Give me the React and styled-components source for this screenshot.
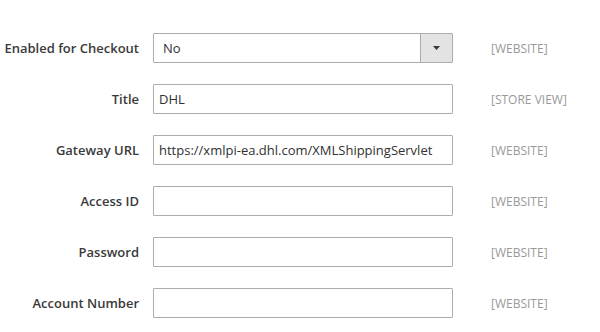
import styled, { createGlobalStyle } from "styled-components";

const GlobalStyle = createGlobalStyle`
  html, body {
    margin: 0;
    padding: 0;
    background: #ffffff;
  }
  body {
    font-family: "Open Sans", "Liberation Sans", sans-serif;
    color: #303030;
  }
`;

const fields = [
  { label: "Enabled for Checkout", type: "select", value: "No", scope: "[WEBSITE]" },
  { label: "Title", value: "DHL", scope: "[STORE VIEW]" },
  { label: "Gateway URL", value: "https://xmlpi-ea.dhl.com/XMLShippingServlet", scope: "[WEBSITE]" },
  { label: "Access ID", value: "", scope: "[WEBSITE]" },
  { label: "Password", value: "", scope: "[WEBSITE]" },
  { label: "Account Number", value: "", scope: "[WEBSITE]" }
];

const App = () => {
  return (
    <>
      <GlobalStyle />
      <Form>
        {fields.map((field, index) => (
          <Row key={`field_${index}`}>
            <Label>{field.label}</Label>
            {field.type === "select" ? (
              <Select>
                <SelectValue>{field.value}</SelectValue>
                <SelectButton>
                  <svg width="7" height="4" viewBox="0 0 7 4">
                    <path d="M0 0 H7 L3.5 4 Z" fill="#41362f" />
                  </svg>
                </SelectButton>
              </Select>
            ) : (
              <Input readOnly value={field.value} />
            )}
            <Scope>{field.scope}</Scope>
          </Row>
        ))}
      </Form>
    </>
  );
};

export default App;

const Form = styled.div`
  display: flex;
  flex-direction: column;
  gap: 21px;
  padding-top: 33px;
  width: 600px;
`;

const Row = styled.div`
  display: grid;
  grid-template-columns: 139px 300px 1fr;
  column-gap: 14px;
  align-items: center;
  height: 30px;
`;

const Label = styled.div`
  text-align: right;
  font-size: 13px;
  font-weight: 600;
  color: #3a3a3a;
  white-space: nowrap;
`;

const Input = styled.input`
  box-sizing: border-box;
  width: 300px;
  height: 30px;
  margin: 0;
  border: 1px solid #adadad;
  border-radius: 1px;
  padding: 0 5px;
  font-family: "Open Sans", "Liberation Sans", sans-serif;
  font-size: 13px;
  color: #303030;
  background: #fff;
  outline: none;
`;

const Select = styled.div`
  box-sizing: border-box;
  width: 300px;
  height: 30px;
  border: 1px solid #adadad;
  border-radius: 1px;
  display: flex;
  align-items: stretch;
  background: #fff;
`;

const SelectValue = styled.div`
  flex: 1;
  display: flex;
  align-items: center;
  padding-left: 9px;
  font-size: 13px;
  color: #303030;
`;

const SelectButton = styled.div`
  width: 31px;
  background: #e3e3e3;
  border-left: 1px solid #adadad;
  display: flex;
  align-items: center;
  justify-content: center;
`;

const Scope = styled.div`
  padding-left: 24px;
  font-size: 12px;
  color: #999999;
  white-space: nowrap;
`;
